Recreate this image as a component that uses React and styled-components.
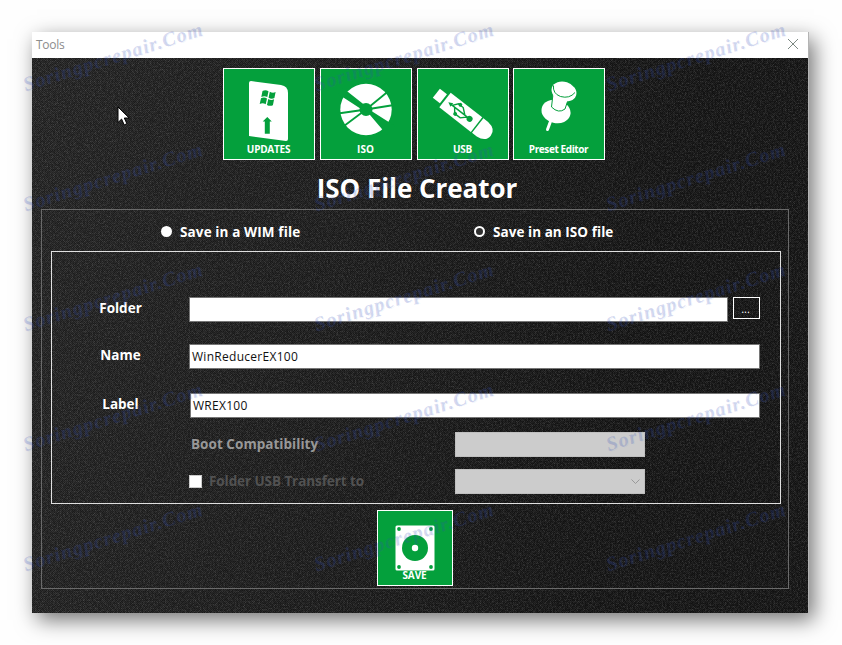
import React from "react";
import styled, { createGlobalStyle } from "styled-components";

const GlobalStyle = createGlobalStyle`
  * {
    box-sizing: border-box;
  }

  body {
    margin: 0;
    background: #fefefe;
    font-family: "Open Sans", "Noto Sans", sans-serif;
    overflow: hidden;
  }
`;

const Page = styled.div`
  position: relative;
  width: 842px;
  height: 645px;
  padding: 32px 0 0 32px;
  overflow: hidden;
`;

const Window = styled.div`
  display: flex;
  flex-direction: column;
  width: 777px;
  height: 581px;
  border-right: 1px solid #b4b4b4;
  box-shadow: 5px 7px 20px 0 rgba(0, 0, 0, 0.55);
`;

const TitleBar = styled.div`
  display: flex;
  justify-content: space-between;
  align-items: center;
  height: 26px;
  padding: 0 9px 2px 4px;
  background: white;
  color: #8c8c8c;
  font-size: 12px;
  letter-spacing: -0.3px;
`;

const Body = styled.div`
  position: relative;
  flex: 1;
  padding: 10px 20px 0 9px;
  background: linear-gradient(100deg, #282828 0%, #202020 40%, #171717 75%);
  color: white;
`;

const Texture = styled.svg`
  position: absolute;
  inset: 0;
  width: 100%;
  height: 100%;
`;

const Content = styled.div`
  position: relative;
`;

const Tiles = styled.div`
  display: grid;
  grid-template-columns: 97px 97px 96px 92px;
  margin-left: 182px;
`;

const TileBox = styled.div`
  display: flex;
  flex-direction: column;
  justify-content: flex-end;
  align-items: center;
  width: ${(props) => props.$size}px;
  height: ${(props) => props.$size}px;
  border: 1px solid white;
  background: #04a03c;

  svg {
    display: block;
    flex: none;
  }
`;

const TileLabel = styled.div`
  height: ${(props) => props.$height}px;
  padding-right: 1px;
  line-height: ${(props) => props.$line}px;
  font-size: 10px;
  font-weight: 700;
  letter-spacing: ${(props) => props.$spacing}px;
  white-space: nowrap;
`;

const Heading = styled.h1`
  height: 49px;
  margin: 0;
  padding-left: 5px;
  line-height: 57px;
  font-size: 26px;
  font-weight: 700;
  letter-spacing: -0.05px;
  text-align: center;
`;

const Group = styled.div`
  width: 748px;
  height: 380px;
  padding: 0 7px 0 9px;
  border: 1px solid #6a6a6a;
`;

const Radios = styled.div`
  display: grid;
  grid-template-columns: 313px 1fr;
  align-items: center;
  height: 41px;
  padding: 3px 0 0 110px;
`;

const RadioLabel = styled.div`
  display: flex;
  align-items: center;
  gap: 7px;
  font-size: 13.5px;
  font-weight: 700;
  letter-spacing: ${(props) => props.$spacing}px;
  white-space: nowrap;
`;

const Dot = styled.span`
  width: 11px;
  height: 11px;
  margin: 0 1px 1px 0;
  border: 2px solid white;
  border-radius: 50%;
  background: ${(props) => (props.$filled ? "white" : "#303030")};
`;

const Panel = styled.div`
  width: 730px;
  height: 253px;
  padding-top: 45px;
  border: 1px solid #e0e0e0;
`;

const Row = styled.div`
  display: flex;
  height: 25px;
  margin-bottom: ${(props) => props.$after}px;
`;

const Label = styled.div`
  width: 137px;
  line-height: 23px;
  text-align: center;
  font-size: 13.5px;
  font-weight: 700;
`;

const Field = styled.div`
  width: ${(props) => props.$width}px;
  margin-left: ${(props) => props.$shift || 0}px;
  padding-left: 2px;
  border: 1px solid #767676;
  background: white;
  color: #111111;
  line-height: 24px;
  font-size: 12px;
  letter-spacing: 0.28px;
`;

const Browse = styled.div`
  width: 27px;
  height: 22px;
  margin-left: 5px;
  padding-right: 2px;
  border: 1px solid white;
  line-height: 21px;
  font-size: 11px;
  text-align: center;
`;

const Option = styled.div`
  display: flex;
  align-items: center;
  width: 266px;
  margin-left: 137px;
  padding: 0 0 1px ${(props) => props.$indent}px;
  color: ${(props) => props.$color};
  font-size: 13.5px;
  font-weight: 700;
  letter-spacing: ${(props) => props.$spacing}px;
  white-space: nowrap;
`;

const Check = styled.span`
  width: 13px;
  height: 13px;
  margin-right: 7px;
  border: 1px solid #cccccc;
  background: white;
`;

const Select = styled.div`
  display: flex;
  align-items: center;
  justify-content: flex-end;
  width: 190px;
  padding-right: 4px;
  border: 1px solid #bfbfbf;
  background: #cccccc;
`;

const SaveRow = styled.div`
  display: flex;
  padding: 6px 0 0 326px;
`;

const Cursor = styled.svg`
  position: absolute;
  left: 117px;
  top: 106px;
`;

const Mark = styled.div`
  position: absolute;
  left: ${(props) => props.$x}px;
  top: ${(props) => props.$y}px;
  color: rgba(48, 76, 182, 0.21);
  text-shadow: 1px 1px 0 rgba(90, 110, 210, 0.07);
  line-height: 24px;
  font-family: "Liberation Serif", serif;
  font-size: 20px;
  font-style: italic;
  font-weight: 700;
  letter-spacing: 1.15px;
  white-space: nowrap;
  transform: rotate(-17.5deg);
  transform-origin: 0 100%;
  pointer-events: none;
`;

const UpdatesIcon = () => (
  <svg width="90" height="74" viewBox="0 0 90 74">
    <path d="M25 14q0-2 2-2l30 4q7 1 7 8v46q0 2-2 2L25 67z" fill="white" />
    <g fill="#04a03c">
      <path d="M38.5 22q3-1.6 6 .2L43.3 28q-3-1.5-6 0z" />
      <path d="M45.8 22.8q3 1.7 5.8.3L50.4 29q-3 1.4-5.8-.3z" />
      <path d="M37 29.3q3-1.5 6 .1l-1.3 5.800q-3-1.700-6-.2z" />
      <path d="M44.300 30q3 1.700 5.800.2l-1.200 6q-3 1.300-5.900-.3z" />
      <path d="M43.300 48l4.500 4.500h-2v12.300h-5V52.500H38.700z" />
    </g>
  </svg>
);

const DiscIcon = () => (
  <svg width="90" height="74" viewBox="0 0 90 74">
    <circle cx="45" cy="40.5" r="25.7" fill="white" />
    <path d="M45 40.5L67 22.5M45 40.5L73 36M45 40.5L17 44.5M45 40.5L23 57" stroke="#04a03c" strokeWidth="1.8" />
    <path d="M22 19L41 34L52 43L74 57L66 66L49 46L37 38L17 25z" fill="#04a03c" />
    <circle cx="45" cy="40.5" r="6.5" fill="#04a03c" />
  </svg>
);

const UsbIcon = () => (
  <svg width="90" height="74" viewBox="0 0 90 74">
    <g transform="translate(18.5 24) rotate(38)">
      <path d="M0-5.5h9V6H0z" fill="white" />
      <path d="M11-9h40V9.5H11z" fill="white" />
      <path d="M52.5-9h6q10.5 1 10.5 9.2T58.5 9.5h-6z" fill="white" />
      <g stroke="#04a03c" strokeWidth="1.4" fill="none">
        <path d="M18 0h24M23 0l4 5h7l5-5M20 0l4-5h6l6 5" />
      </g>
      <g fill="#04a03c">
        <circle cx="42" cy="0" r="3" />
        <circle cx="27.5" cy="5" r="1.9" />
        <circle cx="26" cy="-5.500" r="1.900" />
        <path d="M15 0l4.500-2.200v4.400z" />
      </g>
    </g>
  </svg>
);

const PinIcon = () => (
  <svg width="90" height="74" viewBox="0 0 90 74">
    <path d="M37 51l-3.5 9.500" stroke="white" strokeWidth="3" strokeLinecap="round" />
    <ellipse cx="42" cy="42.5" rx="14.7" ry="11.5" transform="rotate(14 42 42.5)" fill="white" />
    <path d="M39 25l-1.5 13q7 7 13.5 2l4-12z" fill="white" stroke="#04a03c" strokeWidth="1" />
    <ellipse cx="50" cy="22.5" rx="12.7" ry="9.7" transform="rotate(18 50 22.5)" fill="white" />
    <path d="M39.5 16.5q-1 8 7 11q9 2.5 14.5-4" fill="none" stroke="#04a03c" strokeWidth="1" />
  </svg>
);

const DriveIcon = () => (
  <svg width="74" height="60" viewBox="0 0 74 60">
    <rect x="17.5" y="14.5" width="39" height="45" rx="1.5" fill="white" />
    <g fill="#04a03c">
      <circle cx="37" cy="37" r="13" />
      <circle cx="21" cy="18" r="1.9" />
      <circle cx="53" cy="18" r="1.9" />
      <circle cx="21" cy="56" r="1.9" />
      <circle cx="53" cy="56" r="1.9" />
    </g>
    <circle cx="37" cy="37" r="3.2" fill="white" />
  </svg>
);

const tiles = [
  { label: "UPDATES", icon: <UpdatesIcon />, spacing: -0.25 },
  { label: "ISO", icon: <DiscIcon />, spacing: 0 },
  { label: "USB", icon: <UsbIcon />, spacing: -0.2 },
  { label: "Preset Editor", icon: <PinIcon />, spacing: -0.4 },
];

const columns = [27, 318, 610];
const lines = [72, 192, 312, 432, 552];

const App = () => {
  return (
    <Page>
      <GlobalStyle />
      <Window>
        <TitleBar>
          <span>Tools</span>
          <svg width="12" height="12" viewBox="0 0 12 12">
            <path d="M1 1l10 10M11 1L1 11" stroke="#7d8983" strokeWidth="1" />
          </svg>
        </TitleBar>
        <Body>
          <Texture>
            <defs>
              <filter id="grain" x="0" y="0" width="100%" height="100%">
                <feTurbulence type="fractalNoise" baseFrequency="0.6" numOctaves="2" seed="4" />
                <feColorMatrix values="0 0 0 0 0.5  0 0 0 0 0.5  0 0 0 0 0.5  0.5 0 0 0 -0.19" />
              </filter>
              <pattern id="weave" width="4" height="4" patternUnits="userSpaceOnUse">
                <path d="M0 0h1v1h-1zM1 1h1v1h-1zM2 2h1v1h-1zM3 3h1v1h-1zM2 0h1v1h-1zM3 1h1v1h-1zM0 2h1v1h-1zM1 3h1v1h-1z" fill="black" fillOpacity="0.3" />
              </pattern>
            </defs>
            <rect width="100%" height="100%" filter="url(#grain)" />
            <rect width="100%" height="100%" fill="url(#weave)" />
          </Texture>
          <Content>
            <Tiles>
              {tiles.map((tile) => (
                <TileBox key={tile.label} $size={92}>
                  {tile.icon}
                  <TileLabel $height={16} $line={13} $spacing={tile.spacing}>{tile.label}</TileLabel>
                </TileBox>
              ))}
            </Tiles>
            <Heading>ISO File Creator</Heading>
            <Group>
              <Radios>
                <RadioLabel $spacing={0.12}>
                  <Dot $filled />
                  Save in a WIM file
                </RadioLabel>
                <RadioLabel $spacing={0.05}>
                  <Dot />
                  Save in an ISO file
                </RadioLabel>
              </Radios>
              <Panel>
                <Row $after={22}>
                  <Label>Folder</Label>
                  <Field $width={539} />
                  <Browse>...</Browse>
                </Row>
                <Row $after={24}>
                  <Label>Name</Label>
                  <Field $width={571}>WinReducerEX100</Field>
                </Row>
                <Row $after={14}>
                  <Label>Label</Label>
                  <Field $width={570} $shift={1}>WREX100</Field>
                </Row>
                <Row $after={12}>
                  <Option $indent={2} $color="#989898" $spacing={0.04}>Boot Compatibility</Option>
                  <Select />
                </Row>
                <Row $after={0}>
                  <Option $indent={0} $color="#525252" $spacing={-0.08}>
                    <Check />
                    Folder USB Transfert to
                  </Option>
                  <Select>
                    <svg width="9" height="6" viewBox="0 0 9 6">
                      <path d="M0.5 0.5l4 4l4-4" fill="none" stroke="#999999" />
                    </svg>
                  </Select>
                </Row>
              </Panel>
              <SaveRow>
                <TileBox $size={76}>
                  <DriveIcon />
                  <TileLabel $height={14} $line={9} $spacing={-0.1}>SAVE</TileLabel>
                </TileBox>
              </SaveRow>
            </Group>
          </Content>
        </Body>
      </Window>
      <Cursor width="13" height="20" viewBox="0 0 13 20">
        <path d="M1 1v15.5l3.6-3.4l2.6 5.8l2.7-1.2l-2.6-5.7h4.9z" fill="white" stroke="black" />
      </Cursor>
      {lines.map((y) =>
        columns.map((x) => (
          <Mark key={`${x}-${y}`} $x={x} $y={y}>
            Soringpcrepair.Com
          </Mark>
        ))
      )}
    </Page>
  );
};

export default App;
